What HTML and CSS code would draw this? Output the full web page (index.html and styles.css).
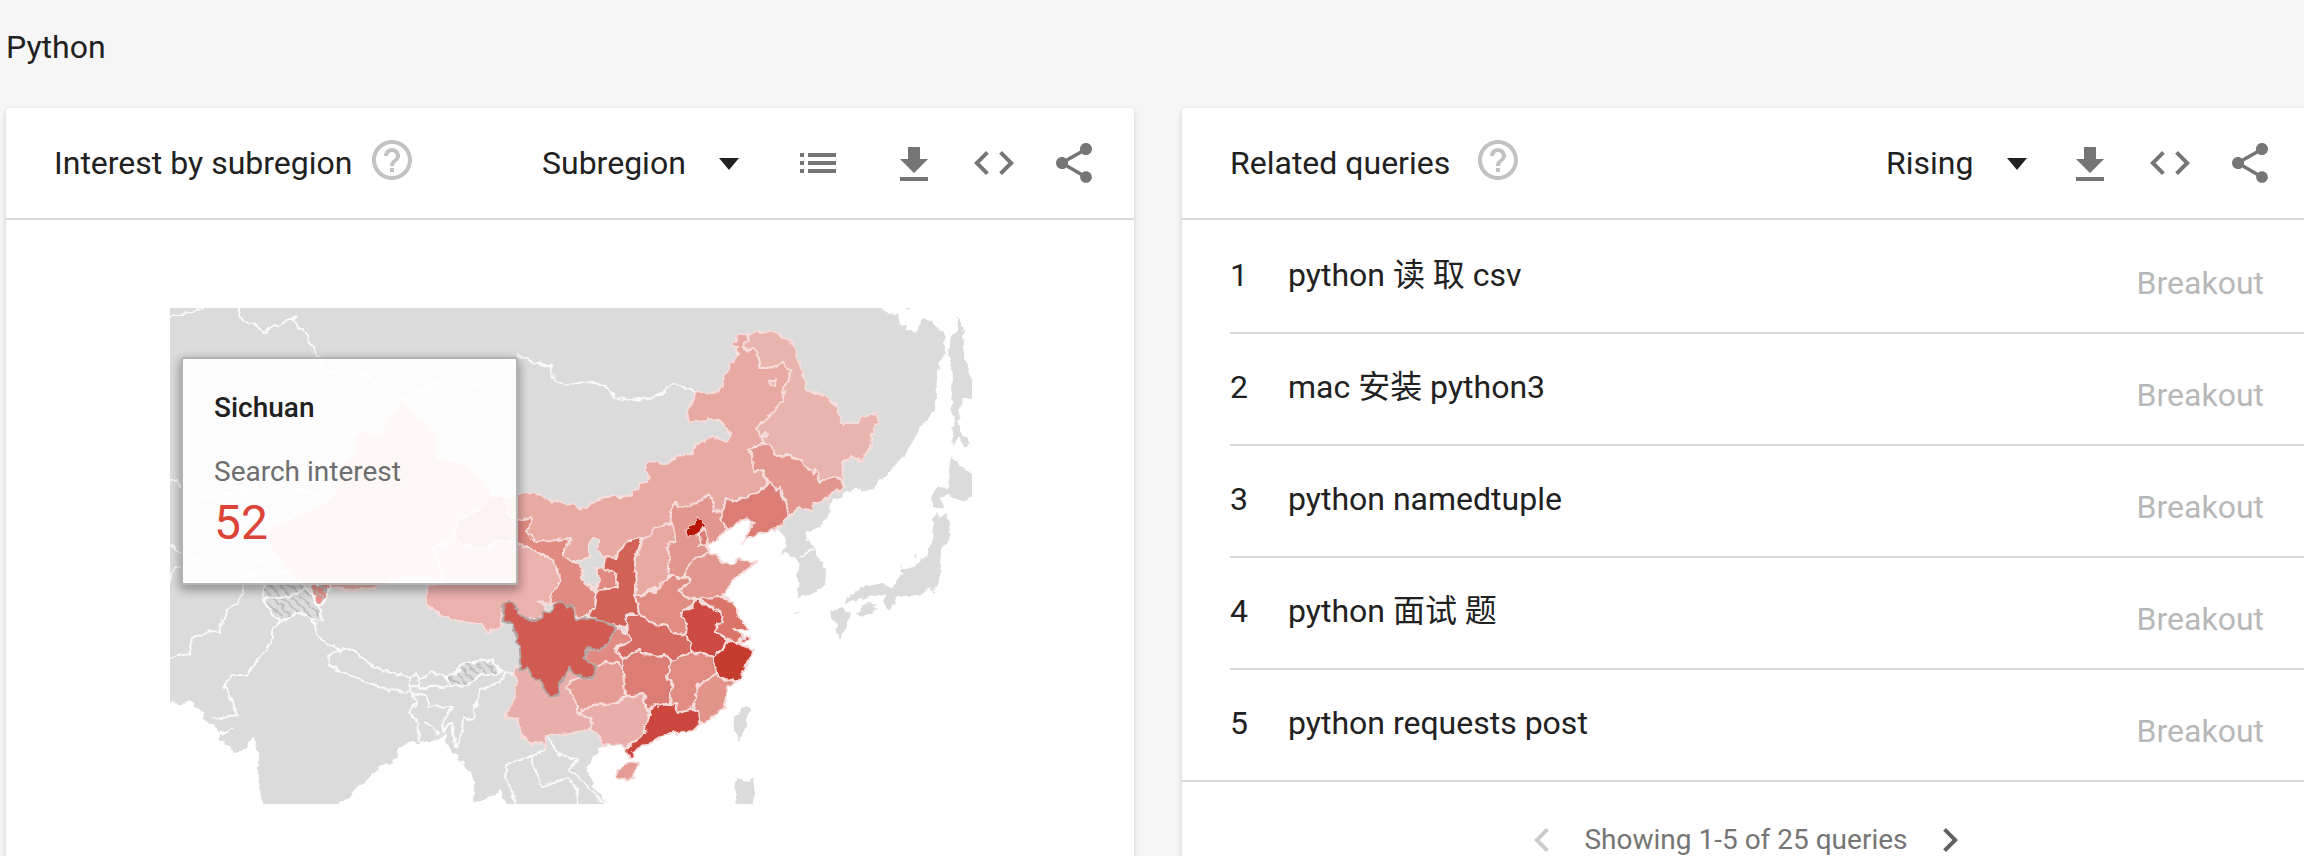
FILE: index.html
```html
<!DOCTYPE html>
<html lang="en">
<head>
<meta charset="utf-8">
<title>Python</title>
<meta name="viewport" content="width=device-width, initial-scale=1">
<link rel="stylesheet" href="styles.css">
</head>
<body>
<svg class="sprite" aria-hidden="true">
  <symbol id="i-help" viewBox="0 0 24 24"><path d="M11 18h2v-2h-2v2zm1-16C6.48 2 2 6.48 2 12s4.480 10 10 10 10-4.480 10-10S17.520 2 12 2zm0 18c-4.410 0-8-3.590-8-8s3.590-8 8-8 8 3.590 8 8-3.590 8-8 8zm0-14c-2.210 0-4 1.790-4 4h2c0-1.100.9-2 2-2s2 .9 2 2c0 2-3 1.750-3 5h2c0-2.250 3-2.500 3-5 0-2.210-1.790-4-4-4z"/></symbol>
  <symbol id="i-list" viewBox="0 0 24 24"><path d="M3 13h2v-2H3v2zm0 4h2v-2H3v2zm0-8h2V7H3v2zm4 4h14v-2H7v2zm0 4h14v-2H7v2zM7 7v2h14V7H7z"/></symbol>
  <symbol id="i-download" viewBox="0 0 24 24"><path d="M19 10h-4V4H9v6H5l7 7 7-7zM5 19v2h14v-2H5z"/></symbol>
  <symbol id="i-code" viewBox="0 0 24 24"><path d="M9.400 16.600L4.800 12l4.600-4.600L8 6l-6 6 6 6 1.400-1.400zm5.200 0l4.600-4.600-4.600-4.600L16 6l6 6-6 6-1.400-1.400z"/></symbol>
  <symbol id="i-share" viewBox="0 0 24 24"><path d="M18 16.080c-.76 0-1.440.3-1.960.77L8.910 12.700c.05-.23.09-.46.09-.7s-.04-.47-.09-.7l7.050-4.110c.54.5 1.250.81 2.040.81 1.660 0 3-1.340 3-3s-1.340-3-3-3-3 1.340-3 3c0 .24.04.47.09.7L8.040 9.810C7.500 9.310 6.790 9 6 9c-1.660 0-3 1.340-3 3s1.340 3 3 3c.79 0 1.500-.31 2.040-.81l7.120 4.160c-.05.21-.08.43-.08.65 0 1.610 1.310 2.920 2.920 2.920s2.920-1.310 2.920-2.920-1.310-2.920-2.920-2.920z"/></symbol>
  <symbol id="i-caret" viewBox="0 0 20 12"><path d="M0 0h20L10 12z"/></symbol>
  <symbol id="i-prev" viewBox="0 0 24 24"><path d="M15.410 7.410L14 6l-6 6 6 6 1.410-1.410L10.830 12z"/></symbol>
  <symbol id="i-next" viewBox="0 0 24 24"><path d="M10 6L8.590 7.410 13.170 12l-4.580 4.590L10 18l6-6z"/></symbol>
</svg>

<h1 class="page-title">Python</h1>

<main class="board">
  <section class="card">
    <header class="card-head">
      <h2 class="card-title">Interest by subregion</h2>
      <button class="icon-btn help" type="button" aria-label="Help"><svg class="icon"><use href="#i-help"/></svg></button>
      <div class="tools">
        <label class="picker picker-wide">
          <select class="picker-select" aria-label="Resolution"><option>Subregion</option></select>
          <svg class="caret"><use href="#i-caret"/></svg>
        </label>
        <button class="icon-btn list-btn" type="button" aria-label="List"><svg class="icon"><use href="#i-list"/></svg></button>
        <div class="actions">
          <button class="icon-btn" type="button" aria-label="Download"><svg class="icon"><use href="#i-download"/></svg></button>
          <button class="icon-btn" type="button" aria-label="Embed"><svg class="icon"><use href="#i-code"/></svg></button>
          <button class="icon-btn" type="button" aria-label="Share"><svg class="icon"><use href="#i-share"/></svg></button>
        </div>
      </div>
    </header>
    <div class="map-area">
      <div class="map-box">
        <svg class="map" viewBox="170 308 802 496" role="img" aria-label="Search interest by province">
          <defs>
            <clipPath id="frame"><rect x="170" y="308" width="802" height="496"/></clipPath>
            <pattern id="hatch" width="7" height="7" patternUnits="userSpaceOnUse" patternTransform="rotate(-45)"><rect width="2" height="7" fill="#bdbdbd"/></pattern>
            <pattern id="hatch2" width="7" height="7" patternUnits="userSpaceOnUse" patternTransform="rotate(-45)"><rect width="2" height="7" fill="#bdbdbd"/></pattern>
            <filter id="rough" x="-2%" y="-2%" width="104%" height="104%">
              <feTurbulence type="fractalNoise" baseFrequency="0.13" numOctaves="2" seed="4"/>
              <feDisplacementMap in="SourceGraphic" scale="7" xChannelSelector="R" yChannelSelector="G"/>
            </filter>
          </defs>
          <g clip-path="url(#frame)"><g filter="url(#rough)">
            <g class="land">
              <path d="M160 298H883V308L888 314 898 313 900 326 907 322 906 330 916 332 920 321 930 319 940 330 946 337 943 343 947 352 940 361 937 377 935 410 923 423 908 450 897 463 883 480 873 488 863 493 857 487 850 490 846 491 840 497 830 502 829 517 818 527 807 532 806 540 814 548 820 558 826 570 825 585 818 591 807 595 798 598 796 590 800 583 797 577 799 567 795 557 781 552 787 545 784 535 777 530 765 533 747 539 743 543 754 522 748 517 742 520 728 530 718 539 707 545 710 552 720 556 722 563 728 565 738 559 757 563 748 569 737 577 727 588 723 595 733 602 738 615 745 625 749 631 733 629 743 636 749 640 742 645 753 650 748 660 745 670 737 682 728 688 727 697 725 707 710 720 700 724 693 731 677 733 665 733 657 740 640 747 632 752 633 758 628 757 627 748 620 744 603 746 593 757 586 772 595 787 612 814H505V804L500 790 495 795 487 798 480 802 472 803 475 788 470 773 460 760 450 750 445 733 437 740 420 743 408 742 397 749 397 755 392 762 380 767 370 778 352 792 350 797 340 803V814H264L260 790 257 773 257 747 254 737 250 737 248 748 236 753 220 738 233 728 222 732 212 725 203 719 202 710 195 708 193 702 160 704Z"/>
              <path d="M958 318L962 325 965 353 974 390V398L962 399 957 422 961 433 968 438 967 447 958 437 953 447 952 433 955 422 951 407 953 373 949 357 951 335 958 332Z"/>
              <path d="M951 456L964 470 976 474V490L964 503 950 495 940 498 943 507 933 509 931 498 938 486 947 487Z"/>
              <path d="M937 512L940 518 947 512 952 533 942 550 940 582 932 593 930 588 922 595 907 595 897 598 889 611 883 603 885 595 868 597 850 602 842 603 862 587 883 583 892 587 902 573 900 563 903 570 913 567 927 555 933 538 932 520Z"/>
              <path d="M857 612L868 602 877 605 872 612 861 618ZM830 612L842 607 850 615 846 628 840 638 835 633 837 623 832 618Z"/>
              <path d="M747 705L750 708 747 723 739 740 733 730 735 718ZM736 778L747 780 753 778 755 793 750 814H735ZM793 613L799 611 795 614ZM915 557L917 553 917 558ZM906 308H910L909 312Z"/>
            </g>
            <g class="lines">
              <path d="M160 318L180 315 205 309M238 300L240 320 253 323 263 332 280 325 297 315 292 320 307 335 318 357 328 373 343 372 367 375 387 395 402 400 427 387 453 378 490 390 513 367 518 355 528 360 551 367 553 378 567 386 583 381 598 384 609 389 615 398 637 400 658 396 673 383 685 389 697 391"/>
              <path d="M160 480L178 481 193 500 227 493 300 490 330 500M160 540L175 548 190 558 207 557 223 547 243 563 267 561M160 660L189 654 192 638 210 631 219 632 227 610 238 603 244 590 242 577 260 570M168 584L175 567 200 565"/>
              <path d="M213 718L238 715 228 693 223 687 232 675 247 675 262 655 273 638 273 628 287 618M313 619L318 638 340 650 350 648 367 662 387 673 410 677 417 675 420 680 430 672 448 677 467 663 492 659 502 672"/>
              <path d="M340 650L330 655 328 665 360 680 387 689 410 693 411 677M418 680L418 687 450 687 448 677M410 693L418 703 409 712 417 720 419 742M410 693L427 695 427 706 453 707 442 723 443 732 452 722 455 747 462 733 463 718 472 720 480 690 500 682 505 672 517 675M410 686L450 687 467 685 480 675 500 673"/>
              <path d="M530 757L507 764 505 778 513 790 517 814M547 748L530 757 537 773 543 787 567 778 577 790 579 814M548 737L558 753 578 760 569 768 583 780 609 810M800 555L814 550M424 722L434 728 440 735"/>
            </g>
            <g class="provinces">
              <path fill="#eab0a6" d="M402 400L417 415 438 433 437 458 460 462 485 480 492 497 480 510 458 520 453 540 432 548 440 563 443 582 423 577 390 580 387 585 360 589 347 591 333 588 317 587 293 582 280 560 267 543 267 530 293 517 330 500 337 487 345 462 353 457 358 430 383 433 387 417Z"/>
              <path fill="#e08a82" d="M503 495L490 497 480 510 458 520 453 540 480 550 500 540 517 543 533 550 553 560 560 578 552 593 550 605 558 602 573 609 574 615 580 618 588 615 595 608 596 593 593 590 584 583 582 568 573 562 563 555 571 538 557 540 538 543 525 532 532 523 530 517 517 520 508 513ZM603 567L616 575 617 588 597 590 599 580 596 568Z"/>
              <path fill="#ebb1ad" d="M517 543L533 550 553 560 560 578 552 593 550 605 537 602 547 608 543 613 538 620 520 616 510 602 503 608 502 617 500 627 487 632 482 625 453 620 435 613 426 603 425 585 443 582 440 563 432 548 453 540 480 550 500 540Z"/>
              <path fill="#e8a9a3" d="M503 495L538 494 550 500 575 505 580 509 603 497 623 497 633 493 642 483 650 479 644 471 649 461 667 465 677 456 692 454 697 444 713 437 727 442 730 436 728 429 718 419 709 418 704 423 697 420 689 423 686 417 697 391 709 395 724 387 723 380 732 362 738 355 738 347 731 345 739 335 746 334 749 339 743 346 749 352 753 348 758 353 761 368 777 367 783 362 792 372 784 388 783 400 778 402 776 410 755 428 762 437 763 444 748 448 752 452 753 472 763 470 767 483 758 492 733 502 726 498 723 513 714 512 713 502 708 495 700 502 678 508 676 502 670 512 672 523 655 528 650 535 642 539 632 539 618 552 617 560 605 558 597 550 598 540 593 538 588 547 588 558 573 562 563 555 571 538 557 540 538 543 525 532 532 523 530 517 517 520 508 513Z"/>
              <path fill="#eab4ae" d="M746 334L767 331 783 337 792 343 801 367 807 390 827 397 837 407 842 423 857 423 860 418 877 413 879 423 874 427 870 447 862 462 850 457 842 463 844 483 839 480 835 476 832 478 820 482 815 469 812 475 802 460 787 455 775 456 770 444 763 444 762 437 755 428 776 410 778 402 783 400 784 388 792 372 783 362 777 367 761 368 758 353 753 348 749 352 743 346 749 339ZM769 381L775 379 774 385 770 385ZM762 435L767 434 766 438Z"/>
              <path fill="#e2968d" d="M748 448L763 444 770 444 775 456 787 455 802 460 812 475 815 469 820 482 832 478 835 476 844 483 842 492 833 491 830 498 813 504 812 511 798 507 789 517 787 507 780 487 776 491 770 483 767 483 763 470 753 472 752 452Z"/>
              <path fill="#db7c74" d="M770 483L776 491 780 487 787 507 789 517 775 530 763 533 747 539 743 543 754 522 748 517 742 520 728 530 720 519 723 513 726 498 733 502 758 492Z"/>
              <path fill="#e2968d" d="M672 523L670 512 676 502 678 508 700 502 708 495 713 502 714 512 723 513 720 519 728 530 718 539 707 545 708 552 692 562 683 577 668 577 670 555 666 548 675 540 674 530Z"/>
              <path fill="#db7c74" d="M705 528L708 538 706 547 699 545 700 534Z"/>
              <path fill="#b71400" d="M685 530L692 526 697 516 704 525 701 530 697 535 687 536Z"/>
              <path fill="#e8a9a3" d="M672 523L654 528 643 540 636 558 634 568 637 580 635 597 655 588 666 586 668 577 670 555 666 548 675 540 674 530Z"/>
              <path fill="#d36257" d="M642 537L632 539 618 552 617 559 605 558 603 567 616 575 617 588 597 590 595 608 588 615 595 619 615 626 627 627 628 622 625 614 640 615 635 597 637 580 634 568 636 558Z"/>
              <path fill="#dbdbdb" d="M573 562L588 558 588 547 593 538 598 540 597 550 605 558 603 567 596 568 599 580 595 588 584 583 582 568Z"/>
              <path fill="#e2968d" d="M708 552L692 562 683 577 691 579 680 590 685 597 700 598 722 597 727 588 737 577 748 569 757 563 738 559 728 565 722 563 720 556Z"/>
              <path fill="#e08c83" d="M635 597L655 591 668 577 683 577 691 579 680 590 685 597 697 600 687 608 681 617 688 623 687 634 673 633 667 625 653 623 640 615Z"/>
              <path fill="#db746b" d="M700 598L722 597 733 602 738 615 745 625 749 631 733 629 743 636 735 642 727 638 715 632 718 623 723 622 720 612 713 608 702 602Z"/>
              <path fill="#cf5148" d="M742 640L749 636 749 641 736 643Z"/>
              <path fill="#cd4c43" d="M697 598L702 603 713 608 720 612 723 622 718 623 715 632 727 639 724 648 713 657 702 653 692 651 687 635 688 623 681 617 683 610 692 609Z"/>
              <path fill="#c53a2f" d="M727 639L742 645 753 650 748 660 745 670 737 682 718 677 713 662 713 657 724 648Z"/>
              <path fill="#d66b62" d="M625 615L640 615 653 623 667 625 673 633 687 635 692 652 672 660 667 655 657 657 638 651 623 658 615 652 617 647 630 642 627 632Z"/>
              <path fill="#e08a82" d="M616 628L630 634 632 642 615 647 617 655 623 660 623 670 617 663 605 662 595 667 584 658 587 648 600 651 612 638Z"/>
              <path fill="#db7c74" d="M623 658L638 651 657 657 667 655 672 663 667 677 672 687 670 703 652 707 647 710 643 694 625 697 623 673Z"/>
              <path fill="#e08c83" d="M672 660L692 652 702 653 713 657 713 662 717 672 697 687 692 710 675 713 670 703 672 687 667 677Z"/>
              <path fill="#e2938a" d="M717 672L718 677 737 682 728 688 727 697 725 707 710 720 700 724 698 712 692 710 697 687Z"/>
              <path fill="#cb463c" d="M652 707L662 705 675 704 677 713 692 710 698 712 700 724 693 731 677 733 665 733 657 740 640 747 632 752 633 758 628 757 627 748 638 740 645 730 650 713Z"/>
              <path fill="#e9aeaa" d="M643 694L646 710 650 713 645 730 638 740 627 746 603 744 597 733 590 730 592 720 577 713 593 705 613 703 625 698Z"/>
              <path fill="#e49c95" d="M605 662L617 663 623 670 625 697 613 703 593 705 577 713 578 707 568 688 570 682 583 678 593 677 595 667Z"/>
              <path fill="#e9aeaa" d="M517 665L521 672 527 667 533 677 542 682 548 697 559 694 560 683 568 668 573 673 583 678 570 682 568 688 578 707 577 713 592 720 590 730 570 733 545 735 547 748 542 743 530 745 522 737 517 720 505 718 515 697 517 677 513 675Z"/>
              <path fill="#e49c95" d="M617 770L627 763 638 762 633 777 626 781 617 777Z"/>
              <path fill="#e9958d" d="M309 584H330L328 593 323 603 317 606 309 592Z"/>
              <path class="active" d="M503 605L510 602 514 603 520 615 532 621 540 619 542 613 550 612 558 601 572 608 575 619 590 618 605 622 616 628 612 638 600 651 587 648 584 658 595 667 593 677 583 678 573 673 568 668 560 683 559 694 548 697 542 682 533 677 527 667 521 672 518 640 512 625 503 620 505 612Z"/>
            </g>
            <g class="lines">
              <path fill="url(#hatch)" d="M242 577L265 585 263 597 270 612 281 622 290 617 300 613 313 619 323 620 317 606 309 592 303 583 285 572ZM309 584H330L328 593 323 603 317 606Z"/>
              <path d="M265 598L293 596 307 587"/>
              <path fill="url(#hatch2)" d="M450 687L448 677 467 663 492 659 500 673 480 675 467 685Z"/>
            </g>
          </g></g>
        </svg>
        <div class="tip" role="tooltip">
          <p class="tip-name">Sichuan</p>
          <p class="tip-label">Search interest</p>
          <p class="tip-value">52</p>
        </div>
      </div>
    </div>
  </section>

  <section class="card">
    <header class="card-head">
      <h2 class="card-title">Related queries</h2>
      <button class="icon-btn help help-far" type="button" aria-label="Help"><svg class="icon"><use href="#i-help"/></svg></button>
      <div class="tools">
        <label class="picker">
          <select class="picker-select" aria-label="Sort"><option>Rising</option></select>
          <svg class="caret"><use href="#i-caret"/></svg>
        </label>
        <div class="actions">
          <button class="icon-btn" type="button" aria-label="Download"><svg class="icon"><use href="#i-download"/></svg></button>
          <button class="icon-btn" type="button" aria-label="Embed"><svg class="icon"><use href="#i-code"/></svg></button>
          <button class="icon-btn" type="button" aria-label="Share"><svg class="icon"><use href="#i-share"/></svg></button>
        </div>
      </div>
    </header>
    <ol class="queries">
      <li class="query"><span class="rank">1</span><a class="term" href="#">python 读 取 csv</a><span class="trend">Breakout</span></li>
      <li class="query"><span class="rank">2</span><a class="term" href="#">mac 安装 python3</a><span class="trend">Breakout</span></li>
      <li class="query"><span class="rank">3</span><a class="term" href="#">python namedtuple</a><span class="trend">Breakout</span></li>
      <li class="query"><span class="rank">4</span><a class="term" href="#">python 面试 题</a><span class="trend">Breakout</span></li>
      <li class="query"><span class="rank">5</span><a class="term" href="#">python requests post</a><span class="trend">Breakout</span></li>
    </ol>
    <footer class="pager">
      <button class="icon-btn" type="button" aria-label="Previous" disabled><svg class="icon"><use href="#i-prev"/></svg></button>
      <span>Showing 1-5 of 25 queries</span>
      <button class="icon-btn next" type="button" aria-label="Next"><svg class="icon"><use href="#i-next"/></svg></button>
    </footer>
  </section>
</main>
</body>
</html>
```

FILE: styles.css
```css
* {
  box-sizing: border-box;
}

html,
body {
  overflow: hidden;
}

body {
  margin: 0;
  background: #f6f6f6;
  color: #212121;
  font-family: Roboto, "Noto Sans CJK SC", sans-serif;
  font-size: 32px;
  line-height: 40px;
}

h1,
h2,
p,
ol {
  margin: 0;
  padding: 0;
  font-size: inherit;
  font-weight: 400;
}

.sprite {
  display: none;
}

.page-title {
  padding: 27px 6px 41px;
}

.board {
  display: grid;
  grid-template-columns: 1fr 1fr;
  gap: 48px;
  margin: 0 -6px 0 6px;
}

.card {
  background: #fff;
  border-radius: 4px;
  box-shadow: 0 2px 6px rgba(0, 0, 0, 0.16);
}

.card-head {
  display: flex;
  align-items: center;
  height: 112px;
  padding: 0 36px 0 48px;
  border-bottom: 2px solid #dbdbdb;
}

.icon-btn {
  display: block;
  padding: 0;
  border: 0;
  background: none;
  color: #757575;
}

.icon {
  display: block;
  width: 48px;
  height: 48px;
  fill: currentColor;
}

.help {
  margin: 0 0 6px 16px;
  color: #c2c2c2;
}

.help-far {
  margin-left: 24px;
}

.tools,
.actions {
  display: flex;
  align-items: center;
}

.tools {
  margin-left: auto;
}

.actions {
  gap: 32px;
}

.picker {
  position: relative;
  margin-right: 39px;
}

.picker-wide {
  margin-right: 55px;
}

.picker-select {
  display: block;
  height: 40px;
  padding: 0 53px 0 0;
  border: 0;
  background: none;
  color: inherit;
  font: inherit;
  appearance: none;
}

.caret {
  position: absolute;
  top: 15px;
  right: 0;
  width: 20px;
  height: 12px;
  fill: #212121;
  pointer-events: none;
}

.list-btn {
  margin-right: 48px;
}

.map-area {
  padding: 88px 46px 88px 48px;
}

.map-box {
  position: relative;
  max-width: 802px;
  margin: 0 auto;
}

.map {
  display: block;
  width: 100%;
}

.land {
  fill: #dbdbdb;
}

.lines {
  fill: none;
  stroke: #fafafa;
  stroke-width: 2;
  stroke-linejoin: round;
}

.provinces {
  stroke: #f6dcda;
  stroke-width: 2;
  stroke-linejoin: round;
}

.provinces [fill="#b71400"] {
  stroke-width: 1;
}

.active {
  fill: #d15a51;
  stroke: #b3a3a1;
  stroke-width: 2;
}

.tip {
  position: absolute;
  top: 49px;
  left: 11px;
  width: 337px;
  padding: 31px 31px 34px;
  border: 2px solid #b3b3b3;
  border-radius: 3px;
  background: rgba(255, 255, 255, 0.9);
  box-shadow: 0 4px 10px 2px rgba(0, 0, 0, 0.3);
  background-clip: padding-box;
  font-size: 28px;
  line-height: 36px;
}

.tip-name {
  font-weight: 500;
}

.tip-label {
  margin-top: 28px;
  color: #6e6e6e;
}

.tip-value {
  margin-top: 7px;
  color: #db4437;
  font-size: 48px;
  line-height: 52px;
}

.queries {
  padding: 2px 0 0 48px;
  list-style: none;
}

.query {
  display: flex;
  align-items: flex-start;
  height: 112px;
  padding: 33px 46px 0 0;
  border-bottom: 2px solid #dbdbdb;
}

.query:last-child {
  height: 110px;
  border-bottom: 0;
}

.rank {
  width: 58px;
}

.term {
  color: inherit;
  text-decoration: none;
}

.trend {
  margin: 8px 0 0 auto;
  color: #b8b8b8;
}

.pager {
  display: flex;
  align-items: center;
  justify-content: center;
  gap: 18px;
  padding: 34px 0;
  border-top: 2px solid #dbdbdb;
  color: #757575;
  font-size: 28px;
}

.pager .icon-btn:disabled {
  color: #cccccc;
}

.pager .next {
  color: #616161;
}
```
